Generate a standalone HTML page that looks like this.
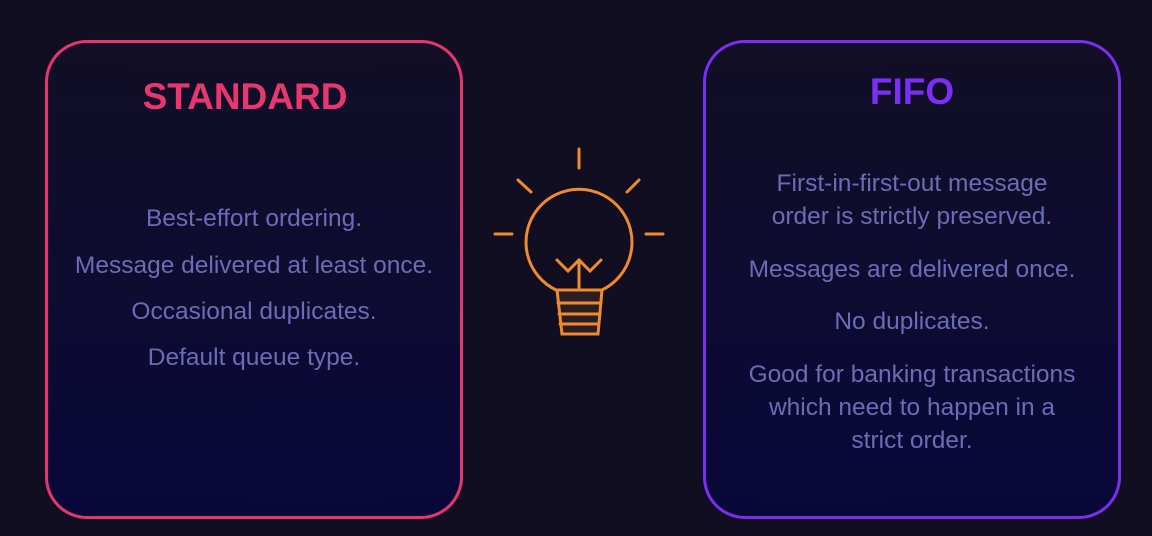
<!DOCTYPE html>
<html><head><style>
body{margin:0;width:1152px;height:536px;overflow:hidden;background:#120e21;font-family:"Liberation Sans",sans-serif;position:relative}
.card{position:absolute;top:40px;width:418px;height:479px;border-radius:42px;background:linear-gradient(#110e25 0%,#0e0c30 50%,#08073a 100%);box-sizing:border-box}
.l{left:45px;border:3px solid #e6356f}
.r{left:703px;border:3px solid #7a2ff0}
.t{position:absolute;width:418px;text-align:center;color:#6a6db5;font-size:24.5px;line-height:28px;white-space:nowrap}
.h{position:absolute;width:418px;text-align:center;font-weight:bold;font-size:37px;line-height:40px}
</style></head><body>
<div class="card l"></div>
<div class="card r"></div>
<div class="h" style="left:36px;top:77px;color:#e8366f">STANDARD</div>
<div class="h" style="left:703px;top:72px;color:#7b2ff5">FIFO</div>
<div class="t" style="left:45px;top:205px">Best-effort ordering.</div>
<div class="t" style="left:45px;top:252px">Message delivered at least once.</div>
<div class="t" style="left:45px;top:298px">Occasional duplicates.</div>
<div class="t" style="left:45px;top:344px">Default queue type.</div>
<div class="t" style="left:703px;top:170px">First-in-first-out message</div>
<div class="t" style="left:703px;top:203px">order is strictly preserved.</div>
<div class="t" style="left:703px;top:256px">Messages are delivered once.</div>
<div class="t" style="left:703px;top:308px">No duplicates.</div>
<div class="t" style="left:703px;top:361px">Good for banking transactions</div>
<div class="t" style="left:703px;top:394px">which need to happen in a</div>
<div class="t" style="left:703px;top:427px">strict order.</div>
<svg style="position:absolute;left:480px;top:140px" width="200" height="200" viewBox="0 0 200 200" fill="none" stroke="#ef8a2f" stroke-width="3" stroke-linecap="round">
<line x1="99" y1="9" x2="99" y2="28"/>
<line x1="38" y1="40" x2="51" y2="52"/>
<line x1="159" y1="40" x2="147" y2="52"/>
<line x1="15" y1="94" x2="32" y2="94"/>
<line x1="166" y1="94" x2="183" y2="94"/>
<path d="M76,150 A53,53 0 1 1 122,150"/>
<path d="M77,120 L88,131 L99,120 L110,131 L121,120"/>
<line x1="99" y1="120" x2="99" y2="148"/>
<path d="M77,150 L122,150 L118,194 L82,194 Z" fill="#2a1e22"/>
<line x1="78" y1="163" x2="121" y2="163"/>
<line x1="79" y1="174" x2="120" y2="174"/>
<line x1="80" y1="184" x2="119" y2="184"/>
</svg>
</body></html>
